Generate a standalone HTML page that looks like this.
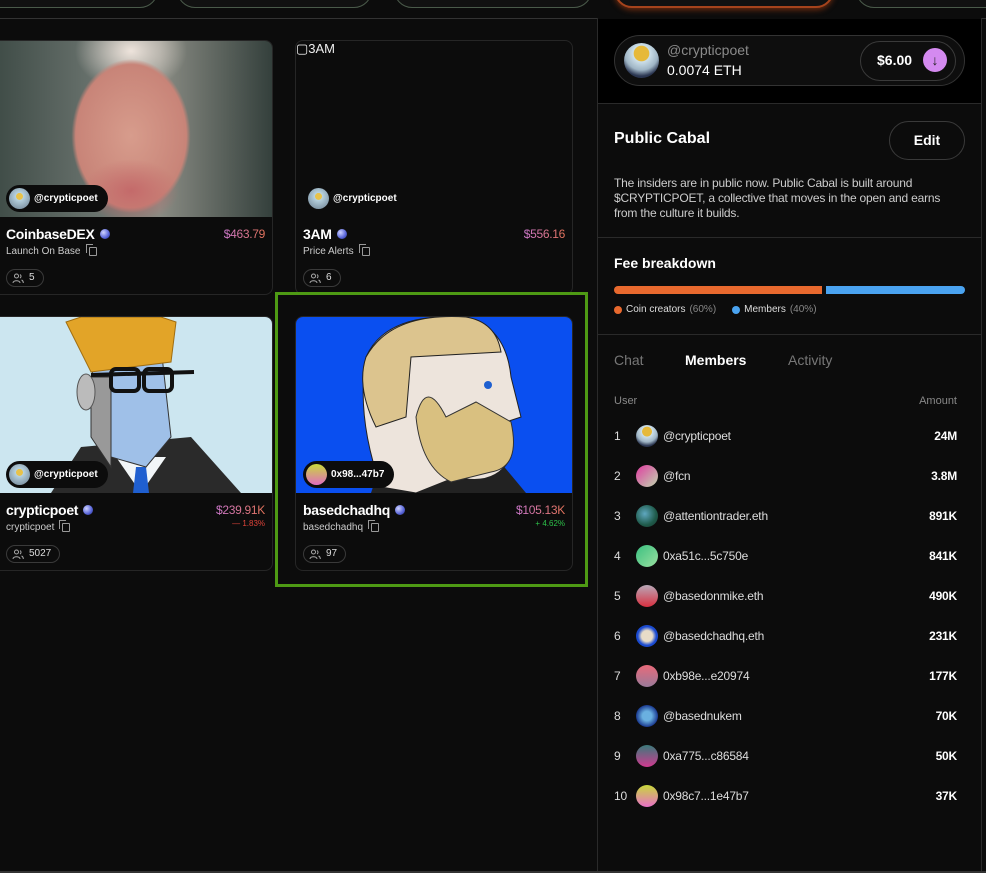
<!DOCTYPE html>
<html><head><meta charset="utf-8"><style>
*{box-sizing:border-box;margin:0;padding:0}
body{width:986px;height:873px;background:#0c0c0c;font-family:"Liberation Sans",sans-serif;color:#fff;position:relative;overflow:hidden}
.a{position:absolute}
.pill{position:absolute;top:-30px;height:38px;border:1px solid #4a5a4a;border-radius:18px;background:#111}
.card{position:absolute;border:1px solid #262626;border-radius:8px;overflow:hidden;background:#0c0c0c}
.img{position:absolute;left:0;top:0;right:0;height:176px;overflow:hidden}
.tag{position:absolute;left:5px;top:144px;height:27px;background:#0c0c0c;border-radius:14px;padding:0 10px 0 3px;font-size:10px;font-weight:bold;display:flex;align-items:center;gap:4px}
.av{width:21px;height:21px;border-radius:50%;display:inline-block}
.title{position:absolute;left:5px;top:185px;font-size:14px;font-weight:bold;display:flex;align-items:center;gap:5px;letter-spacing:-0.3px}
.orb{width:10px;height:10px;border-radius:50%;background:radial-gradient(circle at 35% 35%,#cfd3ff,#5562d8 60%,#23286b)}
.price{position:absolute;right:7px;top:186px;font-size:12px;background:linear-gradient(90deg,#d07ad0,#e6745a);-webkit-background-clip:text;color:transparent;letter-spacing:-0.3px}
.sub{position:absolute;left:5px;top:205px;font-size:10px;color:#ccc;display:flex;align-items:center;gap:5px}
.cp{width:8px;height:9px;border:1px solid #999;border-radius:1px;position:relative;display:inline-block;margin-left:3px}
.cp:before{content:"";position:absolute;left:-4px;top:-4px;width:6px;height:8px;border-left:1px solid #999;border-top:1px solid #999}
.mem{position:absolute;left:5px;top:228px;height:18px;border:1px solid #3a3a3a;border-radius:9px;font-size:10px;padding:0 8px 0 22px;line-height:16px;color:#ddd}
.mem svg{position:absolute;left:5px;top:3px}
.row{position:absolute;left:614px;width:343px;height:22px;font-size:12px;display:flex;align-items:center;letter-spacing:-0.2px}
.row .n{width:22px;color:#ddd}
.row .ra{width:22px;height:22px;border-radius:50%;margin-right:5px}
.row .nm{flex:1;color:#ddd}
.row .am{font-weight:bold}
</style></head><body>
<div class="pill" style="left:-60px;width:218px"></div>
<div class="pill" style="left:177px;width:195px"></div>
<div class="pill" style="left:394px;width:198px"></div>
<div class="pill" style="left:614px;width:220px;border:2px solid #a5431c;box-shadow:0 2px 6px #6b2b10"></div>
<div class="pill" style="left:856px;width:160px"></div>
<div class="a" style="left:0;top:18px;width:986px;height:1px;background:#333"></div>

<!-- card 1 -->
<div class="card" style="left:-10px;top:40px;width:283px;height:255px">
 <div class="img" style="background:radial-gradient(ellipse 60px 40px at 140px 150px,#c46a6a,transparent 80%),radial-gradient(ellipse 85px 110px at 140px 95px,#d79c8c,#c88478 65%,transparent 70%),radial-gradient(ellipse 70px 50px at 140px 10px,#eee4dc,transparent 80%),linear-gradient(90deg,#3d4a45,#6c7570 40%,#8a8c84 60%,#34403c)"></div>
 <div class="tag" style="left:15px"><span class="av" style="background:radial-gradient(circle at 50% 40%,#e8c24a 20%,#b8d3e0 22%,#6a7d8f)"></span>@crypticpoet</div>
 <div class="title" style="left:15px">CoinbaseDEX <span class="orb"></span></div>
 <div class="price">$463.79</div>
 <div class="sub" style="left:15px">Launch On Base <span class="cp"></span></div>
 <div class="mem" style="left:15px"><svg width="12" height="11" viewBox="0 0 12 11" fill="none" stroke="#aaa"><circle cx="4.5" cy="3" r="2"/><path d="M1 10c0-3 7-3 7 0M8 1.5a2 2 0 010 3.5M9.5 7c1.2.5 1.8 1.5 1.8 3"/></svg>5</div>
</div>
<!-- card 2 -->
<div class="card" style="left:295px;top:40px;width:278px;height:255px">
 <div class="a" style="left:0;top:0;font-size:13px;color:#eee">&#9634;3AM</div>
 <div class="tag" style="left:9px;background:none"><span class="av" style="background:radial-gradient(circle at 50% 40%,#e8c24a 20%,#b8d3e0 22%,#6a7d8f)"></span>@crypticpoet</div>
 <div class="title" style="left:7px">3AM <span class="orb"></span></div>
 <div class="price">$556.16</div>
 <div class="sub" style="left:7px">Price Alerts <span class="cp"></span></div>
 <div class="mem" style="left:7px"><svg width="12" height="11" viewBox="0 0 12 11" fill="none" stroke="#aaa"><circle cx="4.5" cy="3" r="2"/><path d="M1 10c0-3 7-3 7 0M8 1.5a2 2 0 010 3.5M9.5 7c1.2.5 1.8 1.5 1.8 3"/></svg>6</div>
</div>
<!-- card 3 -->
<div class="card" style="left:-10px;top:316px;width:283px;height:255px">
 <div class="img" style="background:#cce6f0">
  <svg width="283" height="176" viewBox="0 0 283 176">
   <path d="M60 176 L90 130 L200 120 L250 176Z" fill="#2a2a2a"/>
   <path d="M125 140 L150 176 L175 140Z" fill="#f2f6f8"/>
   <path d="M145 150 L155 150 L158 176 L142 176Z" fill="#1f5fd0"/>
   <path d="M100 40 L170 30 L180 120 L155 150 L120 140 L105 100Z" fill="#9fc0e8" stroke="#333"/>
   <path d="M100 60 L120 60 L120 150 L100 120Z" fill="#999" stroke="#333"/>
   <ellipse cx="95" cy="75" rx="9" ry="18" fill="#bbb" stroke="#555"/>
   <path d="M75 5 L90 0 L170 0 L185 5 L180 45 L100 55Z" fill="#e2a428" stroke="#a06d10"/>
   <rect x="120" y="52" width="28" height="22" rx="5" fill="none" stroke="#111" stroke-width="4"/>
   <rect x="153" y="52" width="28" height="22" rx="5" fill="none" stroke="#111" stroke-width="4"/>
   <path d="M100 58 L203 55" stroke="#111" stroke-width="4"/>
  </svg>
 </div>
 <div class="tag" style="left:15px"><span class="av" style="background:radial-gradient(circle at 50% 40%,#e8c24a 20%,#b8d3e0 22%,#6a7d8f)"></span>@crypticpoet</div>
 <div class="title" style="left:15px">crypticpoet <span class="orb"></span></div>
 <div class="price">$239.91K</div>
 <div class="a" style="right:7px;top:202px;font-size:8px;color:#e0443a">— 1.83%</div>
 <div class="sub" style="left:15px">crypticpoet <span class="cp"></span></div>
 <div class="mem" style="left:15px"><svg width="12" height="11" viewBox="0 0 12 11" fill="none" stroke="#aaa"><circle cx="4.5" cy="3" r="2"/><path d="M1 10c0-3 7-3 7 0M8 1.5a2 2 0 010 3.5M9.5 7c1.2.5 1.8 1.5 1.8 3"/></svg>5027</div>
</div>
<!-- card 4 -->
<div class="card" style="left:295px;top:316px;width:278px;height:255px">
 <div class="img" style="background:#0a4ff0">
  <svg width="278" height="176" viewBox="0 0 278 176">
   <path d="M75 176 L90 130 L200 140 L230 176Z" fill="#222"/>
   <path d="M70 40 Q90 -5 170 0 Q210 10 215 60 L225 100 L210 105 L215 140 Q200 170 160 160 L120 176 L85 170 Q60 100 70 40Z" fill="#ede4dc" stroke="#222"/>
   <path d="M70 40 Q95 -5 170 0 Q200 5 205 35 L115 40 L110 100 L80 110 Q60 70 70 40Z" fill="#dcc48e" stroke="#222"/>
   <path d="M120 100 Q130 60 150 100 L180 85 L215 105 Q225 150 195 155 L155 165 Q125 150 120 100Z" fill="#d9c080" stroke="#333"/>
   <circle cx="192" cy="68" r="4" fill="#1e5fd0"/>
  </svg>
 </div>
 <div class="tag" style="left:7px"><span class="av" style="background:linear-gradient(#c9da3a,#e06cc0)"></span>0x98...47b7</div>
 <div class="title" style="left:7px">basedchadhq <span class="orb"></span></div>
 <div class="price">$105.13K</div>
 <div class="a" style="right:7px;top:202px;font-size:8px;color:#2ec24a">+ 4.62%</div>
 <div class="sub" style="left:7px">basedchadhq <span class="cp"></span></div>
 <div class="mem" style="left:7px"><svg width="12" height="11" viewBox="0 0 12 11" fill="none" stroke="#aaa"><circle cx="4.5" cy="3" r="2"/><path d="M1 10c0-3 7-3 7 0M8 1.5a2 2 0 010 3.5M9.5 7c1.2.5 1.8 1.5 1.8 3"/></svg>97</div>
</div>
<div class="a" style="left:275px;top:292px;width:313px;height:295px;border:3px solid #4e9a14"></div>

<!-- right panel -->
<div class="a" style="left:597px;top:18px;width:385px;height:853px;border-left:1px solid #2a2a2a;border-right:1px solid #2a2a2a;background:#0c0c0c"></div>
<div class="a" style="left:598px;top:19px;width:383px;height:84px;background:#000"></div>
<div class="a" style="left:614px;top:35px;width:351px;height:51px;border:1px solid #333;border-radius:26px;background:#0e0e0e"></div>
<div class="a" style="left:624px;top:43px;width:35px;height:35px;border-radius:50%;background:radial-gradient(circle at 50% 30%,#e6b93a 25%,#cde0ea 27%,#9fb5c5 55%,#2a3550 75%)"></div>
<div class="a" style="left:667px;top:42px;font-size:14px;color:#8a8a8a">@crypticpoet</div>
<div class="a" style="left:667px;top:62px;font-size:14px">0.0074 ETH</div>
<div class="a" style="left:860px;top:41px;width:96px;height:40px;border:1px solid #3a3a3a;border-radius:20px"></div>
<div class="a" style="left:877px;top:52px;font-size:14px;font-weight:bold">$6.00</div>
<div class="a" style="left:923px;top:48px;width:24px;height:24px;border-radius:50%;background:#d48af0;color:#222;font-size:14px;text-align:center;line-height:24px;font-weight:bold">↓</div>
<div class="a" style="left:598px;top:103px;width:383px;height:1px;background:#2a2a2a"></div>

<div class="a" style="left:614px;top:130px;font-size:16px;font-weight:bold">Public Cabal</div>
<div class="a" style="left:889px;top:121px;width:76px;height:39px;border:1px solid #3a3a3a;border-radius:20px;text-align:center;line-height:37px;font-size:14px;font-weight:bold">Edit</div>
<div class="a" style="left:614px;top:176px;width:352px;font-size:12px;line-height:15px;color:#ccc;letter-spacing:-0.2px">The insiders are in public now. Public Cabal is built around $CRYPTICPOET, a collective that moves in the open and earns from the culture it builds.</div>
<div class="a" style="left:598px;top:237px;width:383px;height:1px;background:#2a2a2a"></div>

<div class="a" style="left:614px;top:255px;font-size:14px;font-weight:bold">Fee breakdown</div>
<div class="a" style="left:614px;top:286px;width:208px;height:8px;border-radius:4px 0 0 4px;background:#e8692e"></div>
<div class="a" style="left:826px;top:286px;width:139px;height:8px;border-radius:0 4px 4px 0;background:#4aa3f0"></div>
<div class="a" style="left:614px;top:304px;font-size:10px;color:#ddd;display:flex;align-items:center;gap:4px"><span style="width:8px;height:8px;border-radius:50%;background:#e8692e;display:inline-block"></span>Coin creators <span style="color:#888">(60%)</span><span style="width:8px;height:8px;border-radius:50%;background:#4aa3f0;display:inline-block;margin-left:12px"></span>Members <span style="color:#888">(40%)</span></div>
<div class="a" style="left:598px;top:334px;width:383px;height:1px;background:#2a2a2a"></div>

<div class="a" style="left:614px;top:352px;font-size:14px;color:#777">Chat</div>
<div class="a" style="left:685px;top:352px;font-size:14px;font-weight:bold">Members</div>
<div class="a" style="left:788px;top:352px;font-size:14px;color:#777">Activity</div>
<div class="a" style="left:614px;top:395px;font-size:11px;color:#888">User</div>
<div class="a" style="left:900px;top:395px;width:57px;text-align:right;font-size:11px;color:#888">Amount</div>

<div class="row" style="top:425px"><span class="n">1</span><span class="ra" style="background:radial-gradient(circle at 50% 30%,#e6b93a 25%,#cde0ea 27%,#9fb5c5 55%,#2a3550 75%)"></span><span class="nm">@crypticpoet</span><span class="am">24M</span></div>
<div class="row" style="top:465px"><span class="n">2</span><span class="ra" style="background:linear-gradient(135deg,#e03aa0,#c0d8b0)"></span><span class="nm">@fcn</span><span class="am">3.8M</span></div>
<div class="row" style="top:505px"><span class="n">3</span><span class="ra" style="background:radial-gradient(circle at 40% 40%,#5fa8c0,#1f5a4a 60%,#1a3a30)"></span><span class="nm">@attentiontrader.eth</span><span class="am">891K</span></div>
<div class="row" style="top:545px"><span class="n">4</span><span class="ra" style="background:linear-gradient(135deg,#3ac080,#9ae0a0)"></span><span class="nm">0xa51c...5c750e</span><span class="am">841K</span></div>
<div class="row" style="top:585px"><span class="n">5</span><span class="ra" style="background:linear-gradient(#b8a8b8,#d83040)"></span><span class="nm">@basedonmike.eth</span><span class="am">490K</span></div>
<div class="row" style="top:625px"><span class="n">6</span><span class="ra" style="background:radial-gradient(circle,#e8dcc8 35%,#1a4ad0 60%)"></span><span class="nm">@basedchadhq.eth</span><span class="am">231K</span></div>
<div class="row" style="top:665px"><span class="n">7</span><span class="ra" style="background:linear-gradient(#e86a7a,#9a7a9a)"></span><span class="nm">0xb98e...e20974</span><span class="am">177K</span></div>
<div class="row" style="top:705px"><span class="n">8</span><span class="ra" style="background:radial-gradient(circle,#6ab0e0 30%,#1a3a90 70%)"></span><span class="nm">@basednukem</span><span class="am">70K</span></div>
<div class="row" style="top:745px"><span class="n">9</span><span class="ra" style="background:linear-gradient(#3a7a7a,#d03a90)"></span><span class="nm">0xa775...c86584</span><span class="am">50K</span></div>
<div class="row" style="top:785px"><span class="n">10</span><span class="ra" style="background:linear-gradient(#c8d83a,#e870c8)"></span><span class="nm">0x98c7...1e47b7</span><span class="am">37K</span></div>
<div class="a" style="left:0;top:871px;width:986px;height:2px;background:#333"></div>
</body></html>
